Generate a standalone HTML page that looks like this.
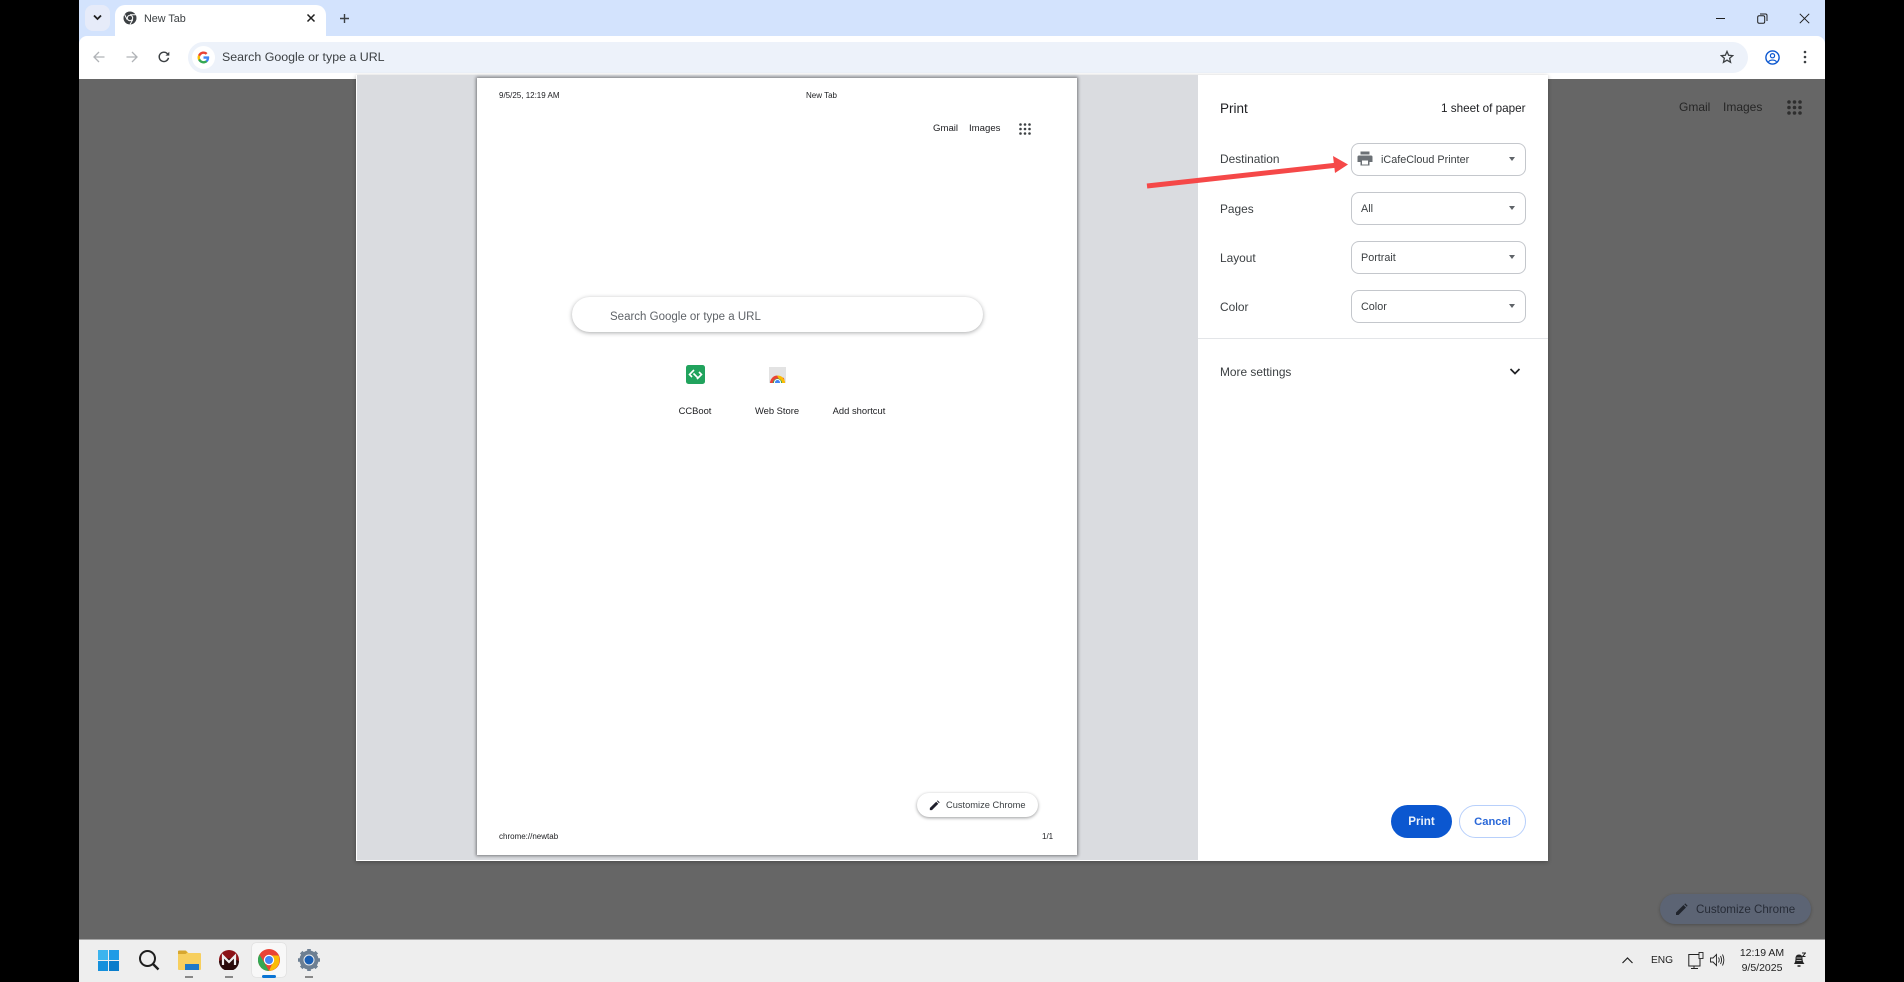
<!DOCTYPE html>
<html><head><meta charset="utf-8"><title>New Tab</title>
<style>
html,body{margin:0;padding:0;background:#000;}
body{width:1904px;height:982px;position:relative;overflow:hidden;font-family:"Liberation Sans",sans-serif;}
div,span,svg{position:absolute;}
.t{white-space:nowrap;line-height:16px;}
.sel{left:1351px;width:173px;height:31px;border:1px solid #c4c7cc;border-radius:8px;background:#fff;}
.sel i{position:absolute;right:10px;top:13px;width:0;height:0;border-left:3.500px solid transparent;border-right:3.500px solid transparent;border-top:4px solid #5f6368;}
.lab{left:1220px;font-size:11.900px;color:#3c4043;}
.val{font-size:10.800px;color:#3c4043;}
.p{font-family:"Liberation Sans",sans-serif;color:#202124;}
.c{text-align:center;width:80px;}
</style></head><body>
<!-- browser -->
<div style="left:79px;top:0;width:1746px;height:44px;background:#d3e3fd;"></div>
<div style="left:79px;top:36px;width:1746px;height:43px;background:#fff;border-radius:8px 8px 0 0;"></div>
<div style="left:79px;top:79px;width:1746px;height:860px;background:#666;"></div>
<!-- tab strip -->
<div style="left:85px;top:5px;width:25px;height:26px;background:#e6ebf9;border-radius:8px;"></div>
<svg style="left:92px;top:13px" width="11" height="9" viewBox="0 0 11 9"><path d="M2 2.500 5.500 6 9 2.500" fill="none" stroke="#1f1f1f" stroke-width="1.800"/></svg>
<div style="left:115px;top:5px;width:211px;height:32px;background:#fff;border-radius:10px 10px 0 0;"></div>
<svg style="left:123px;top:11px" width="14" height="14" viewBox="0 0 14 14"><circle cx="7" cy="7" r="6.500" fill="#3c4043"/><circle cx="7" cy="7" r="3.200" fill="#fff"/><circle cx="7" cy="7" r="2.200" fill="#3c4043"/><path d="M7 3.800H13M4.200 8.600 1.600 3.500M9.800 8.600 7 13.400" stroke="#fff" stroke-width="1"/></svg>
<div class="t" style="left:144px;top:11px;font-size:10.800px;color:#3c4043;">New Tab</div>
<svg style="left:306px;top:13px" width="10" height="10" viewBox="0 0 10 10"><path d="M1.500 1.500 8.500 8.500M8.500 1.500 1.500 8.500" stroke="#1f1f1f" stroke-width="1.500"/></svg>
<svg style="left:339px;top:13px" width="11" height="11" viewBox="0 0 11 11"><path d="M5.500 1V10M1 5.500H10" stroke="#3c4043" stroke-width="1.400"/></svg>
<!-- window controls -->
<div style="left:1716px;top:18px;width:9px;height:1px;background:#1f1f1f;"></div>
<svg style="left:1757px;top:13px" width="11" height="11" viewBox="0 0 11 11"><rect x=".7" y="2.700" width="7" height="7.500" rx="1.500" fill="none" stroke="#1f1f1f"/><path d="M3 1H8.500Q10 1 10 2.500V8" fill="none" stroke="#1f1f1f"/></svg>
<svg style="left:1799px;top:13px" width="11" height="11" viewBox="0 0 11 11"><path d="M.8.800 10.200 10.200M10.200.800 .8 10.200" stroke="#1f1f1f" stroke-width="1"/></svg>
<!-- toolbar -->
<svg style="left:93px;top:51px" width="12" height="12" viewBox="0 0 12 12"><path d="M11.500 6H1M6 1 1 6 6 11" fill="none" stroke="#b0b3b7" stroke-width="1.300"/></svg>
<svg style="left:126px;top:51px" width="12" height="12" viewBox="0 0 12 12"><path d="M.5 6H11M6 1 11 6 6 11" fill="none" stroke="#b0b3b7" stroke-width="1.300"/></svg>
<svg style="left:158px;top:51px" width="12" height="12" viewBox="0 0 12 12"><path d="M10.500 6.800A4.700 4.700 0 1 1 9.300 2.600L10.800 4" fill="none" stroke="#3c4043" stroke-width="1.400"/><path d="M11.300.8V4.600H7.500Z" fill="#3c4043"/></svg>
<div style="left:188px;top:42px;width:1560px;height:31px;background:#edf2fa;border-radius:16px;"></div>
<div style="left:192px;top:46px;width:23px;height:23px;background:#fff;border-radius:50%;"></div>
<svg style="left:197px;top:51px" width="13" height="13" viewBox="0 0 48 48"><path fill="#4285f4" d="M45 24.500c0-1.600-.1-3.100-.4-4.500H24v8.500h11.800c-.5 2.800-2 5.100-4.300 6.700v5.500h7C42.600 36.900 45 31.200 45 24.500z"/><path fill="#34a853" d="M24 46c5.900 0 10.900-2 14.500-5.300l-7-5.500c-2 1.300-4.500 2.100-7.500 2.100-5.700 0-10.600-3.900-12.300-9.100H4.400v5.700C8 41.100 15.400 46 24 46z"/><path fill="#fbbc05" d="M11.700 28.200c-.4-1.300-.7-2.700-.7-4.200s.3-2.900.7-4.200v-5.700H4.400C2.900 17 2 20.400 2 24s.9 7 2.400 9.900z"/><path fill="#ea4335" d="M24 10.700c3.200 0 6.100 1.100 8.400 3.300l6.300-6.300C34.900 4.200 29.900 2 24 2 15.400 2 8 6.900 4.400 14.100l7.300 5.700c1.700-5.200 6.600-9.100 12.300-9.100z"/></svg>
<div class="t" style="left:222px;top:49px;font-size:12.400px;color:#3c4043;">Search Google or type a URL</div>
<svg style="left:1720px;top:50px" width="14" height="14" viewBox="0 0 24 24"><path d="M12 2.500 14.800 9l7 .6-5.300 4.600 1.600 6.900L12 17.400 5.900 21.100l1.600-6.900L2.200 9.600l7-.6z" fill="none" stroke="#3c4043" stroke-width="2.200"/></svg>
<svg style="left:1765px;top:50px" width="15" height="15" viewBox="0 0 15 15"><circle cx="7.500" cy="7.500" r="6.600" fill="none" stroke="#0b57d0" stroke-width="1.400"/><circle cx="7.500" cy="5.700" r="2.100" fill="none" stroke="#0b57d0" stroke-width="1.200"/><path d="M3.500 11.800C5 9.500 10 9.500 11.500 11.800" fill="none" stroke="#0b57d0" stroke-width="1.200"/></svg>
<svg style="left:1803px;top:50px" width="4" height="14" viewBox="0 0 4 14"><circle cx="2" cy="2" r="1.300" fill="#3c4043"/><circle cx="2" cy="7" r="1.300" fill="#3c4043"/><circle cx="2" cy="12" r="1.300" fill="#3c4043"/></svg>
<!-- NTP behind -->
<div class="t" style="left:1679px;top:99px;font-size:12px;color:#262626;">Gmail</div>
<div class="t" style="left:1723px;top:99px;font-size:12px;color:#262626;">Images</div>
<svg style="left:1787px;top:100px" width="15" height="15" viewBox="0 0 15 15" fill="#2e2e2e"><circle cx="2" cy="2" r="1.800"/><circle cx="7.500" cy="2" r="1.800"/><circle cx="13" cy="2" r="1.800"/><circle cx="2" cy="7.500" r="1.800"/><circle cx="7.500" cy="7.500" r="1.800"/><circle cx="13" cy="7.500" r="1.800"/><circle cx="2" cy="13" r="1.800"/><circle cx="7.500" cy="13" r="1.800"/><circle cx="13" cy="13" r="1.800"/></svg>
<div style="left:1660px;top:894px;width:151px;height:30px;background:#5c6474;border-radius:15px;box-shadow:0 1px 3px rgba(0,0,0,.25);"></div>
<svg style="left:1675px;top:903px" width="13" height="13" viewBox="0 0 13 13"><path d="M1 12V9.500L8.500 2 11 4.500 3.500 12Z" fill="#20242c"/><path d="M9.300 1.200 10.200.4 12.600 2.800 11.800 3.700Z" fill="#20242c"/></svg>
<div class="t" style="left:1696px;top:902px;font-size:11.600px;color:#272c37;">Customize Chrome</div>
<!-- dialog -->
<div style="left:356px;top:75px;width:1192px;height:786px;background:#fff;box-shadow:0 1px 4px rgba(0,0,0,.3);"></div>
<div style="left:357px;top:75px;width:841px;height:785px;background:#dadce0;"></div>
<!-- paper -->
<div class="p" style="left:477px;top:78px;width:600px;height:777px;background:#fff;box-shadow:0 0 3px 1px rgba(0,0,0,.45);"></div>
<div class="t p" style="left:499px;top:88px;font-size:8px;">9/5/25, 12:19 AM</div>
<div class="t p" style="left:806px;top:88px;font-size:8px;">New Tab</div>
<div class="t p" style="left:933px;top:121px;font-size:9.600px;">Gmail</div>
<div class="t p" style="left:969px;top:121px;font-size:9.600px;">Images</div>
<svg style="left:1019px;top:123px" width="12" height="12" viewBox="0 0 12 12" fill="#3c4043"><circle cx="1.500" cy="1.500" r="1.300"/><circle cx="6" cy="1.500" r="1.300"/><circle cx="10.500" cy="1.500" r="1.300"/><circle cx="1.500" cy="6" r="1.300"/><circle cx="6" cy="6" r="1.300"/><circle cx="10.500" cy="6" r="1.300"/><circle cx="1.500" cy="10.500" r="1.300"/><circle cx="6" cy="10.500" r="1.300"/><circle cx="10.500" cy="10.500" r="1.300"/></svg>
<div style="left:572px;top:297px;width:411px;height:35px;background:#fff;border-radius:18px;box-shadow:0 1px 4px rgba(32,33,36,.38);"></div>
<div class="t" style="left:610px;top:309px;font-size:11.500px;color:#5f6368;">Search Google or type a URL</div>
<svg style="left:686px;top:365px" width="19" height="19" viewBox="0 0 19 19"><rect width="19" height="19" rx="2.500" fill="#21a35d"/><path d="M8 5 3.500 9.500 6 12M11 14 15.500 9.500 13 7M7.500 8.500 11.500 12.500" fill="none" stroke="#fff" stroke-width="1.600"/></svg>
<svg style="left:769px;top:367px" width="17" height="16" viewBox="0 0 17 16"><rect width="17" height="16" fill="#e3e3e3"/><path d="M1 16A7.500 7.500 0 0 1 8.500 8.500L15 11 16 16Z" fill="#ea4335"/><path d="M8 8.500A7.500 7.500 0 0 1 16 16H12Z" fill="#fbbc05"/><path d="M4 16 A4.500 4.500 0 0 1 13 16Z" fill="#34a853"/><circle cx="8.500" cy="15.500" r="3" fill="#4285f4" stroke="#fff"/></svg>
<div class="t p c" style="left:655px;top:403px;font-size:9.400px;">CCBoot</div>
<div class="t p c" style="left:737px;top:403px;font-size:9.400px;">Web Store</div>
<div class="t p c" style="left:819px;top:403px;font-size:9.400px;">Add shortcut</div>
<div style="left:917px;top:793px;width:121px;height:24px;background:#fff;border-radius:12px;box-shadow:0 1px 3px rgba(32,33,36,.45);"></div>
<svg style="left:929px;top:800px" width="11" height="11" viewBox="0 0 13 13"><path d="M1 12V9.500L8.500 2 11 4.500 3.500 12Z" fill="#1f1f2b"/><path d="M9.300 1.200 10.200.4 12.600 2.800 11.800 3.700Z" fill="#1f1f2b"/></svg>
<div class="t" style="left:946px;top:797px;font-size:9.300px;color:#3c4043;">Customize Chrome</div>
<div class="t p" style="left:499px;top:829px;font-size:8px;">chrome://newtab</div>
<div class="t p" style="left:1042px;top:829px;font-size:8px;">1/1</div>
<!-- sidebar -->
<div class="t" style="left:1220px;top:101px;font-size:13.500px;color:#202124;">Print</div>
<div class="t" style="left:1441px;top:101px;font-size:11.700px;color:#202124;">1 sheet of paper</div>
<div class="t lab" style="top:151px;">Destination</div>
<div class="t lab" style="top:201px;">Pages</div>
<div class="t lab" style="top:250px;">Layout</div>
<div class="t lab" style="top:299px;">Color</div>
<div class="sel" style="top:143px;"><i></i></div>
<svg style="left:1357px;top:151px" width="16" height="15" viewBox="0 0 16 15"><path d="M3.500 0.500H12.500V3.500H3.500Z" fill="#6b7075"/><path d="M2 4.500H14Q15.500 4.500 15.500 6V11H12.500V14.500H3.500V11H.5V6Q.5 4.500 2 4.500Z" fill="#6b7075"/><rect x="5" y="9.500" width="6" height="4" fill="#fff"/></svg>
<div class="t val" style="left:1381px;top:152px;">iCafeCloud Printer</div>
<div class="sel" style="top:192px;"><i></i></div>
<div class="t val" style="left:1361px;top:201px;">All</div>
<div class="sel" style="top:241px;"><i></i></div>
<div class="t val" style="left:1361px;top:250px;">Portrait</div>
<div class="sel" style="top:290px;"><i></i></div>
<div class="t val" style="left:1361px;top:299px;">Color</div>
<div style="left:1198px;top:338px;width:350px;height:1px;background:#e3e5e8;"></div>
<div class="t lab" style="top:364px;">More settings</div>
<svg style="left:1509px;top:367px" width="12" height="9" viewBox="0 0 12 9"><path d="M1.500 2 6 6.500 10.500 2" fill="none" stroke="#202124" stroke-width="1.700"/></svg>
<div style="left:1391px;top:805px;width:61px;height:33px;background:#0b57d0;border-radius:17px;"></div>
<div class="t" style="left:1391px;top:814px;width:61px;text-align:center;font-size:11.600px;font-weight:bold;color:#eaf1fb;">Print</div>
<div style="left:1459px;top:805px;width:65px;height:31px;border:1px solid #b8d0fb;border-radius:17px;background:#fff;"></div>
<div class="t" style="left:1459px;top:814px;width:67px;text-align:center;font-size:11.200px;font-weight:bold;color:#2a68d8;">Cancel</div>
<!-- arrow -->
<svg style="left:1140px;top:150px" width="215" height="45" viewBox="0 0 215 45"><path d="M7 36 198 15" stroke="#f54848" stroke-width="5" fill="none"/><path d="M208 14.500 193 6 195 23Z" fill="#f54848"/></svg>
<!-- taskbar -->
<div style="left:79px;top:939px;width:1746px;height:43px;background:#eeeeee;border-top:1px solid #a5a5a5;box-sizing:border-box;"></div>
<svg style="left:98px;top:950px" width="21" height="21" viewBox="0 0 21 21"><rect width="10" height="10" fill="#3cb4ee"/><rect x="11" width="10" height="10" fill="#1f9be6"/><rect y="11" width="10" height="10" fill="#1590dc"/><rect x="11" y="11" width="10" height="10" fill="#0a7dcb"/></svg>
<svg style="left:138px;top:949px" width="22" height="22" viewBox="0 0 22 22"><circle cx="9.500" cy="9.500" r="7.500" fill="none" stroke="#1e1e1e" stroke-width="2"/><path d="M15 15 20.500 20.500" stroke="#1e1e1e" stroke-width="2.400"/></svg>
<svg style="left:178px;top:950px" width="23" height="21" viewBox="0 0 23 21"><path d="M0 2Q0 .5 1.500 .5H8L10.500 3H22Q23 3 23 4V19Q23 20 22 20H1Q0 20 0 19Z" fill="#f7cf5e"/><path d="M0 1.500Q0 .5 1.500 .5H7.500L9.500 2.500 7.500 4H0Z" fill="#d7a72f"/><rect x="7" y="14" width="14" height="6" fill="#1e78c8"/></svg>
<svg style="left:219px;top:950px" width="20" height="20" viewBox="0 0 20 20"><circle cx="10" cy="10" r="10" fill="#8c1216"/><path d="M0 11A10 10 0 0 0 20 11Q10 6 0 11Z" fill="#2a0a0b"/><path d="M4 15V6L10 12 16 6V15" fill="none" stroke="#eee" stroke-width="2.200"/></svg>
<div style="left:252px;top:943px;width:34px;height:34px;background:#f8f8f8;border-radius:4px;box-shadow:0 0 1px rgba(0,0,0,.25);"></div>
<svg style="left:258px;top:949px" width="22" height="22" viewBox="0 0 22 22"><circle cx="11" cy="11" r="11" fill="#ea4335"/><path d="M11 22A11 11 0 0 1 1.470 5.500L6.500 14 11 22Z" fill="#34a853"/><path d="M11 6.500H20.530A11 11 0 0 1 11 22L15 13Z" fill="#fbbc05"/><circle cx="11" cy="11" r="5.200" fill="#fff"/><circle cx="11" cy="11" r="4" fill="#4285f4"/></svg>
<div style="left:262px;top:975px;width:14px;height:2.500px;background:#0a74d4;border-radius:2px;"></div>
<svg style="left:298px;top:949px" width="22" height="22" viewBox="0 0 22 22"><circle cx="11" cy="11" r="7.500" fill="none" stroke="#6d7f92" stroke-width="4"/><path d="M11 0V4M11 18V22M0 11H4M18 11H22M3.200 3.200 6 6M16 16 18.800 18.800M3.200 18.800 6 16M16 6 18.800 3.200" stroke="#6d7f92" stroke-width="3.600"/><circle cx="11" cy="11" r="4.500" fill="#1a5fb4"/></svg>
<div style="left:185px;top:976px;width:8px;height:2px;background:#888;"></div>
<div style="left:225px;top:976px;width:8px;height:2px;background:#888;"></div>
<div style="left:305px;top:976px;width:8px;height:2px;background:#888;"></div>
<svg style="left:1621px;top:956px" width="13" height="9" viewBox="0 0 13 9"><path d="M1.500 7 6.500 2 11.500 7" fill="none" stroke="#222" stroke-width="1.200"/></svg>
<div class="t" style="left:1651px;top:953px;font-size:10.200px;color:#222;">ENG</div>
<svg style="left:1688px;top:952px" width="16" height="17" viewBox="0 0 16 17"><path d="M11 2.500H.8V14H12V7" fill="none" stroke="#222"/><rect x="11" y=".5" width="4" height="6" fill="none" stroke="#222" stroke-width=".9"/><path d="M6 14V16M3 16.500H10" stroke="#222"/></svg>
<svg style="left:1710px;top:953px" width="15" height="14" viewBox="0 0 15 14"><path d="M.5 5V9H3L6.500 12.500V1.500L3 5Z" fill="none" stroke="#222" stroke-width=".9"/><path d="M8.500 4.500Q10 7 8.500 9.500M10.500 3Q12.600 7 10.500 11M12.500 1.500Q15.200 7 12.500 12.500" fill="none" stroke="#222" stroke-width=".9"/></svg>
<div class="t" style="left:1735px;top:945px;width:54px;text-align:center;font-size:10.500px;color:#222;">12:19 AM</div>
<div class="t" style="left:1735px;top:960px;width:54px;text-align:center;font-size:10.500px;color:#222;">9/5/2025</div>
<svg style="left:1793px;top:952px" width="13" height="16" viewBox="0 0 13 16"><path d="M1 12Q2.500 10 2.500 6.500 2.500 2.500 6 2.500 9.500 2.500 9.500 6.500 9.500 10 11.500 12Z" fill="#222"/><path d="M4.500 14H7.500" stroke="#222" stroke-width="1.500"/><path d="M9 1H12.500L9.500 4.500H12.500" fill="none" stroke="#222"/><path d="M3.500 6H8.500M3.500 8.500H8.500" stroke="#eee" stroke-width=".8"/></svg>
</body></html>
